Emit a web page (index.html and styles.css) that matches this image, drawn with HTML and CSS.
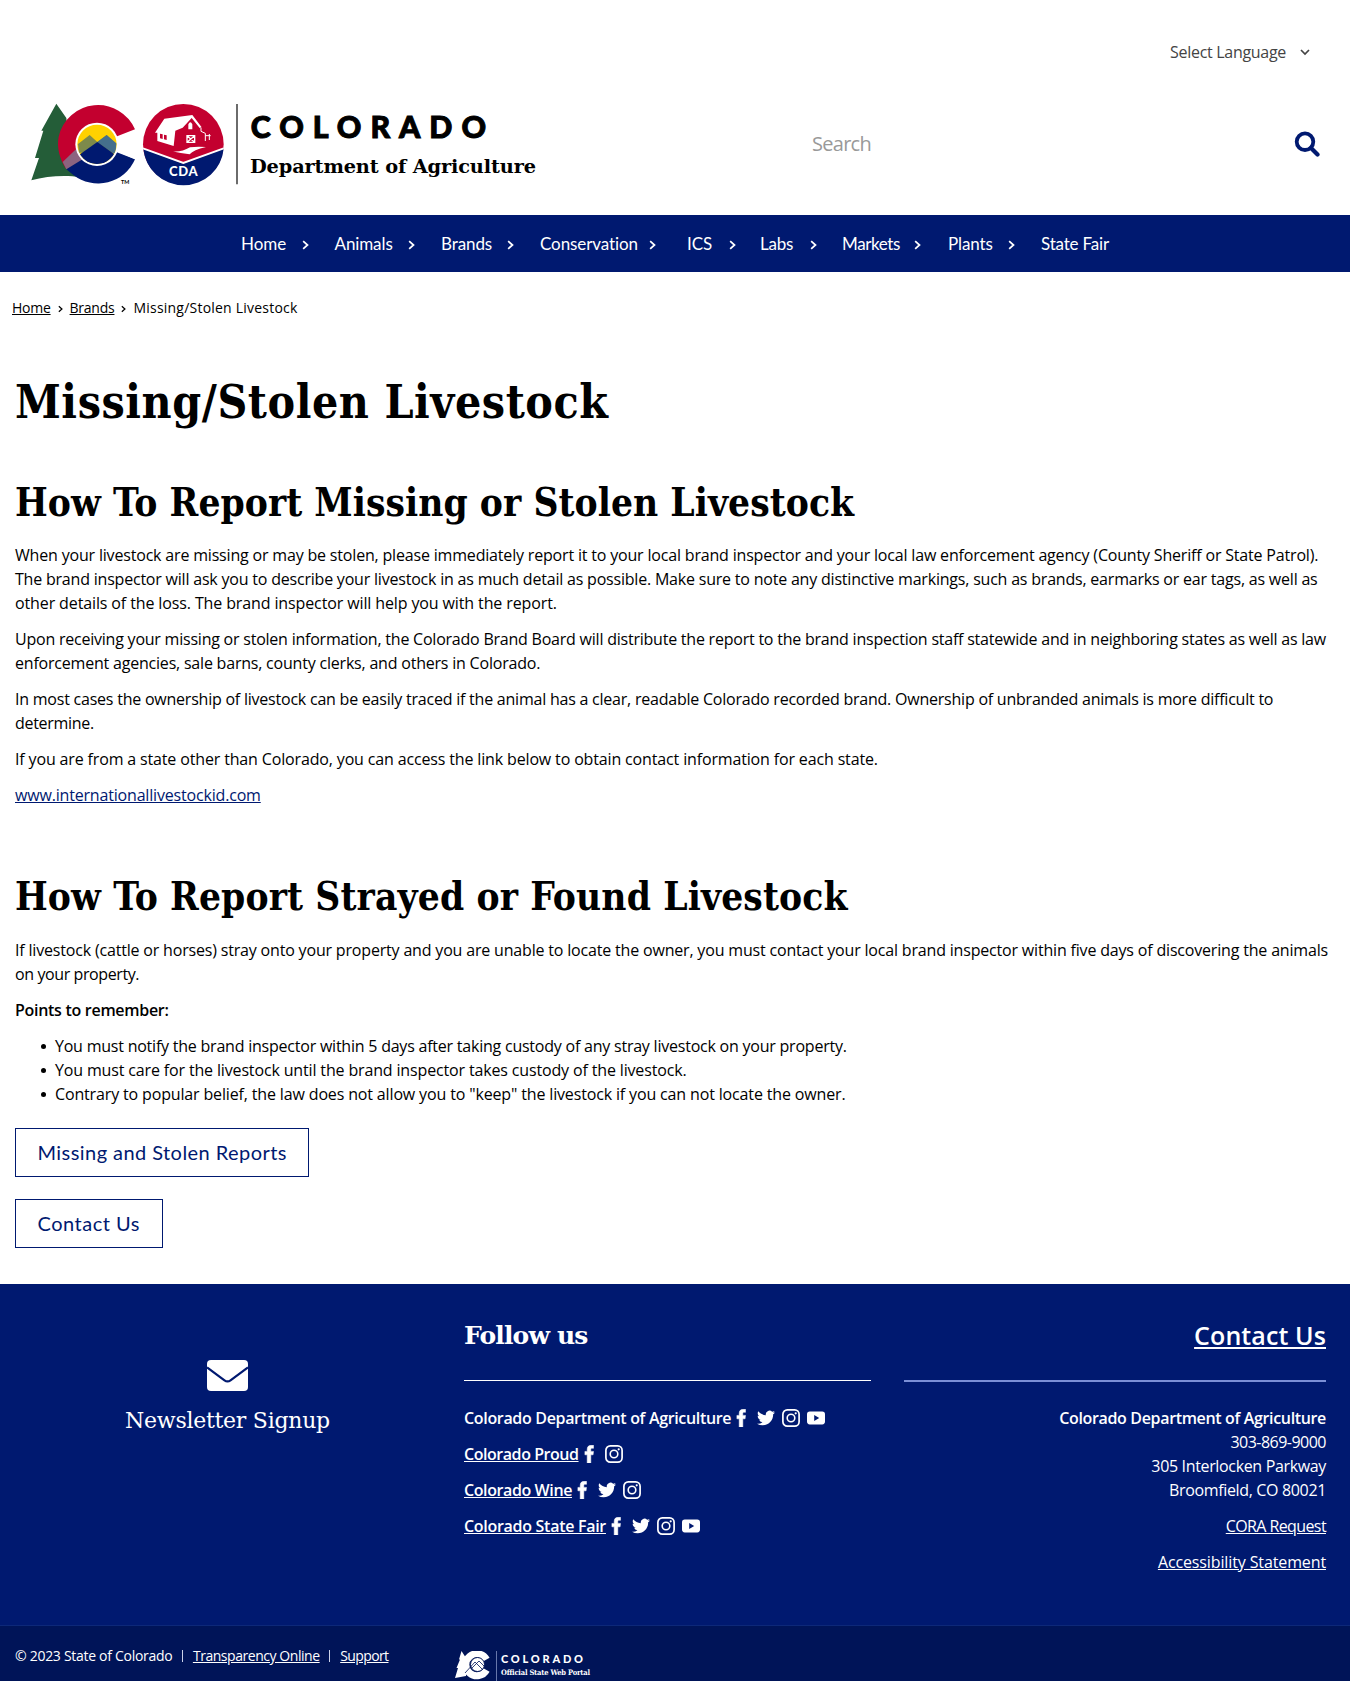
FILE: index.html
```
<!DOCTYPE html>
<html lang="en">
<head>
<meta charset="utf-8">
<title>Missing/Stolen Livestock | Department of Agriculture</title>
<link rel="stylesheet" href="styles.css">
</head>
<body>
<svg class="defs" aria-hidden="true">
  <symbol id="fb" viewBox="0 0 18 18"><path stroke="#fff" stroke-width=".5" d="M7.200 18V9.800H4.900V6.400h2.300V4.500C7.200 1.700 8.600.3 11.300.3h2.200v3h-1.400c-1 0-1.300.4-1.300 1.400v1.700h2.700l-.4 3.400h-2.300V18z"/></symbol>
  <symbol id="tw" viewBox="0 0 24 24"><path d="M23.950 4.570a10 10 0 0 1-2.820.77 4.960 4.960 0 0 0 2.160-2.720c-.95.56-2 .96-3.120 1.190a4.920 4.920 0 0 0-8.380 4.480C7.690 8.090 4.070 6.130 1.640 3.160a4.820 4.820 0 0 0-.67 2.480c0 1.710.87 3.210 2.190 4.100a4.900 4.900 0 0 1-2.230-.62v.06a4.920 4.920 0 0 0 3.950 4.830 5 5 0 0 1-2.210.08 4.940 4.940 0 0 0 4.600 3.420A9.870 9.870 0 0 1 0 19.540a13.990 13.990 0 0 0 7.550 2.210c9.050 0 14-7.500 14-13.980 0-.21 0-.42-.02-.63a9.940 9.940 0 0 0 2.460-2.550z"/></symbol>
  <symbol id="ig" viewBox="0 0 18 18"><rect x=".9" y=".9" width="16.200" height="16.200" rx="4.400" fill="none" stroke="#fff" stroke-width="1.700"/><circle cx="9" cy="9" r="3.800" fill="none" stroke="#fff" stroke-width="1.600"/><circle cx="13.700" cy="4.300" r="1.100"/></symbol>
  <symbol id="yt" viewBox="0 0 18 18"><path fill-rule="evenodd" d="M2.800 2.600h12.400A2.800 2.800 0 0 1 18 5.400v7.200a2.800 2.800 0 0 1-2.800 2.800H2.800A2.800 2.800 0 0 1 0 12.600V5.400a2.800 2.800 0 0 1 2.800-2.800zM7.200 6.100v5.800L12.200 9z"/></symbol>
  <symbol id="chev" viewBox="0 0 6 8"><path d="M1 .7 4.700 4 1 7.300" fill="none" stroke="currentColor" stroke-width="1.500"/></symbol>
</svg>

<header class="header">
  <div class="language"><span>Select Language</span>
    <svg width="10" height="7" viewBox="0 0 10 7"><path d="M1 1l4 4 4-4" fill="none" stroke="#444" stroke-width="1.700"/></svg>
  </div>
  <div class="brandbar">
    <svg class="logo" viewBox="30 36 1530 252" role="img" aria-label="Colorado Department of Agriculture">
      <path fill="#245d38" d="M109 41 139 84 150 190 180 262C140 255 80 258 34 271L57 204H45L70 122H64Z"/>
      <path fill="#c3002f" d="M345 118A121 121 0 0 0 116 140C110 172 118 205 139 238L232 162Z"/>
      <path fill="#001970" d="M139 238 178 200 232 164 345 208A121 121 0 0 1 160 255Z"/>
      <path fill="#8c6480" d="M128 216 174 172 200 200 139 238Z"/>
      <path fill="#fff" d="M297 141 345 120V208L297 187Z"/>
      <circle cx="231" cy="163" r="65" fill="#fff"/>
      <circle cx="231" cy="163" r="59" fill="#ffd100"/>
      <path fill="#7d8a4b" d="M174 162 209 135 232 156 260 135 288 162 285 188 177 188Z"/>
      <path fill="#456f8c" d="M232 156 260 135 289 160A59 59 0 0 1 282 191Z"/>
      <path fill="#001970" d="M180 193 232 156 282 192A59 59 0 0 1 180 193Z"/>
      <text x="303" y="282" font-family="Lato,sans-serif" font-size="17" font-weight="700" textLength="25" lengthAdjust="spacingAndGlyphs">TM</text>
      <circle cx="490" cy="163" r="121" fill="#c3002f"/>
      <path fill="#001970" d="M370 176 490 221 611 176A121 121 0 0 1 370 176Z"/>
      <path fill="none" stroke="#fff" stroke-width="6" d="M369 175 490 219 611 175"/>
      <path fill="#fff" d="M405 128 433 86 517 75 545 112 539 114 515 84 488 113 466 122 461 168 412 153V128Z"/>
      <path fill="#c3002f" d="M420 131 428 133V147L420 145ZM432 134 440 136V150L432 148Z"/>
      <path fill="none" stroke="#fff" stroke-width="4" d="M501 137H524V157H501ZM501 137 524 157M524 137 501 157"/>
      <path fill="none" stroke="#fff" stroke-width="3" d="M543 114V124L556 130V153M556 137H572M568 132V150"/>
      <path fill="#fff" d="M505 118V103Q511 90 517 103V118ZM456 184Q485 187 510 172Q530 169 558 171Q520 180 509 193Q482 190 456 184Z"/>
      <text x="490" y="259" text-anchor="middle" fill="#fff" font-family="Lato,sans-serif" font-weight="900" font-size="39" textLength="86">CDA</text>
      <path stroke="#222" stroke-width="4" d="M651 42V283"/>
      <text x="692" y="144" stroke="#000" stroke-width="3" font-family="Lato,sans-serif" font-weight="900" font-size="91" textLength="706">COLORADO</text>
      <text x="690" y="248" font-family="'DejaVu Serif',serif" font-weight="700" font-size="58" textLength="858">Department of Agriculture</text>
    </svg>
    <div class="search">
      <span>Search</span>
      <svg width="26" height="26" viewBox="0 0 26 26"><circle cx="11" cy="10.700" r="8.300" fill="none" stroke="#001970" stroke-width="3.800"/><path d="M17 17 23.500 23.500" stroke="#001970" stroke-width="4.200" stroke-linecap="round"/></svg>
    </div>
  </div>
</header>

<nav class="nav">
  <a class="n1">Home<svg><use href="#chev"/></svg></a>
  <a class="n2">Animals<svg><use href="#chev"/></svg></a>
  <a class="n3">Brands<svg><use href="#chev"/></svg></a>
  <a class="n4">Conservation<svg><use href="#chev"/></svg></a>
  <a class="n5">ICS<svg><use href="#chev"/></svg></a>
  <a class="n6">Labs<svg><use href="#chev"/></svg></a>
  <a class="n7">Markets<svg><use href="#chev"/></svg></a>
  <a class="n8">Plants<svg><use href="#chev"/></svg></a>
  <a>State Fair</a>
</nav>

<div class="crumbs"><u>Home</u><svg><use href="#chev"/></svg><u>Brands</u><svg><use href="#chev"/></svg><span class="current">Missing/Stolen Livestock</span></div>

<main class="content">
  <h1>Missing/Stolen Livestock</h1>
  <h2>How To Report Missing or Stolen Livestock</h2>
  <p><span class="l18">When your livestock are missing or may be stolen, please immediately report it to your local brand inspector and your local law enforcement agency (County Sheriff or State Patrol).</span>
  <span class="l20">The brand inspector will ask you to describe your livestock in as much detail as possible. Make sure to note any distinctive markings, such as brands, earmarks or ear tags, as well as</span>
  <span class="l12">other details of the loss. The brand inspector will help you with the report.</span></p>
  <p><span class="l22">Upon receiving your missing or stolen information, the Colorado Brand Board will distribute the report to the brand inspection staff statewide and in neighboring states as well as law</span>
  <span class="l20">enforcement agencies, sale barns, county clerks, and others in Colorado.</span></p>
  <p><span class="l22">In most cases the ownership of livestock can be easily traced if the animal has a clear, readable Colorado recorded brand. Ownership of unbranded animals is more difficult to</span>
  <span class="l28">determine.</span></p>
  <p><span class="l15">If you are from a state other than Colorado, you can access the link below to obtain contact information for each state.</span></p>
  <p><span class="l18"><a class="link">www.internationallivestockid.com</a></span></p>
  <h2 class="second">How To Report Strayed or Found Livestock</h2>
  <p><span class="l18">If livestock (cattle or horses) stray onto your property and you are unable to locate the owner, you must contact your local brand inspector within five days of discovering the animals</span>
  <span class="l40">on your property.</span></p>
  <p><span class="l28"><b>Points to remember:</b></span></p>
  <ul>
    <li class="l22">You must notify the brand inspector within 5 days after taking custody of any stray livestock on your property.</li>
    <li class="l15">You must care for the livestock until the brand inspector takes custody of the livestock.</li>
    <li class="l15">Contrary to popular belief, the law does not allow you to "keep" the livestock if you can not locate the owner.</li>
  </ul>
  <a class="button wide">Missing and Stolen Reports</a>
  <a class="button">Contact Us</a>
</main>

<footer class="footer">
  <div class="newsletter">
    <svg width="41" height="31" viewBox="0 0 41 31"><rect width="41" height="31" rx="4" fill="#fff"/><path d="M0 7.500 17.500 20.300Q20.500 22.500 23.500 20.300L41 7.500" fill="none" stroke="#001970" stroke-width="2.200"/></svg>
    <span>Newsletter Signup</span>
  </div>
  <div class="follow">
    <h3>Follow us</h3>
    <div class="row"><b>Colorado Department of Agriculture</b><svg><use href="#fb"/></svg><svg><use href="#tw"/></svg><svg><use href="#ig"/></svg><svg><use href="#yt"/></svg></div>
    <div class="row"><b class="l45"><u>Colorado Proud</u></b><svg><use href="#fb"/></svg><svg><use href="#ig"/></svg></div>
    <div class="row"><b class="l40"><u>Colorado Wine</u></b><svg><use href="#fb"/></svg><svg><use href="#tw"/></svg><svg><use href="#ig"/></svg></div>
    <div class="row"><b class="l28"><u>Colorado State Fair</u></b><svg><use href="#fb"/></svg><svg><use href="#tw"/></svg><svg><use href="#ig"/></svg><svg><use href="#yt"/></svg></div>
  </div>
  <div class="contact">
    <h3><u>Contact Us</u></h3>
    <p><b>Colorado Department of Agriculture</b><br><span class="l52">303-869-9000</span><br>305 Interlocken Parkway<br>Broomfield, CO 80021</p>
    <p class="l60"><u>CORA Request</u></p>
    <p class="l12"><u>Accessibility Statement</u></p>
  </div>
</footer>
<div class="legal">
  <div class="copyright"><span class="l28">© 2023 State of Colorado</span><i></i><u>Transparency Online</u><i></i><u class="l60">Support</u></div>
  <svg class="portal" width="140" height="30" viewBox="0 0 140 30">
    <path fill="#fff" d="M6.500 0 11 7V25L0 27 3 17H1.500L5 8.500H4Z"/>
    <path d="M31.500 8.500A11 11 0 1 0 31.500 19" fill="none" stroke="#fff" stroke-width="7"/>
    <circle cx="22.500" cy="13.500" r="7" fill="#fff" stroke="#001458"/>
    <path d="M10 22 20 11 28 19M17 17 24 10 29 15" fill="none" stroke="#001458" stroke-width=".8"/>
    <path d="M41.500 0V30" stroke="#8190c0" stroke-width=".8"/>
    <g fill="#fff"><text x="46" y="12" font-family="Lato,sans-serif" font-weight="900" font-size="11" textLength="82">COLORADO</text>
    <text x="46" y="24" font-family="'DejaVu Serif Condensed','DejaVu Serif',serif" font-weight="700" font-size="7.500" textLength="89">Official State Web Portal</text></g>
  </svg>
</div>
</body>
</html>
```
FILE: styles.css
```
* { box-sizing: border-box; }
body {
  margin: 0;
  height: 1681px;
  overflow: hidden;
  background: #fff;
  color: #000;
  font: 16px/24px "Open Sans", sans-serif;
}
.defs { display: none; }
h1, h2, h3, p, ul { margin: 0; }

.header { height: 215px; padding: 40px 30px 0; }
.language {
  display: flex;
  align-items: center;
  justify-content: flex-end;
  gap: 14px;
  height: 24px;
  padding-right: 10px;
  color: #444;
  letter-spacing: -0.3px;
}
.brandbar { display: flex; justify-content: space-between; padding-top: 38px; }
.logo { width: 510px; height: 84px; overflow: visible; }
.search {
  display: flex;
  align-items: center;
  justify-content: space-between;
  width: 508px;
  height: 84px;
  color: #999;
  font-size: 20px;
  letter-spacing: -0.72px;
}

.nav {
  display: flex;
  align-items: center;
  height: 57px;
  padding-left: 241px;
  background: #001970;
  color: #fff;
  font: 17px/24px Lato, sans-serif;
  letter-spacing: -0.1px;
}
.nav a { display: flex; align-items: center; justify-content: space-between; white-space: nowrap; padding-right: 26px; }
.nav a:last-child { padding: 0; letter-spacing: -0.18px; }
.nav svg { width: 7px; height: 10px; margin-top: 2px; }
.nav .n1 { width: 93.5px; letter-spacing: 0; }
.nav .n2 { width: 106.5px; }
.nav .n3 { width: 99px; }
.nav .n4 { width: 147px; padding-right: 31px; }
.nav .n5 { width: 73px; padding-right: 24px; }
.nav .n6 { width: 82px; padding-right: 25px; letter-spacing: -0.26px; }
.nav .n7 { width: 106px; padding-right: 27px; letter-spacing: -0.38px; }
.nav .n8 { width: 93px; }

.crumbs {
  display: flex;
  align-items: center;
  padding: 24px 12px 0;
  font-size: 14px;
  letter-spacing: -0.25px;
}
.crumbs svg { width: 5px; height: 8px; margin: 1px 7px 0; }
.crumbs .current { letter-spacing: 0.22px; }

.content { padding: 0 15px; }
h1, h2 {
  font-family: "DejaVu Serif Condensed", "DejaVu Serif", serif;
  white-space: nowrap;
}
h1 { margin-top: 52px; font-size: 46px; line-height: 60px; letter-spacing: 0.55px; }
h2 { margin: 46px 0 15px; font-size: 38.5px; line-height: 50px; letter-spacing: 0.05px; }
h2.second { margin: 65px 0 16px; letter-spacing: 0.12px; }
.content p { margin-bottom: 12px; }
.content p > span { display: block; white-space: nowrap; }
.l12 { letter-spacing: -0.12px; }
.l15 { letter-spacing: -0.15px; }
.l18 { letter-spacing: -0.18px; }
.l20 { letter-spacing: -0.205px; }
.l22 { letter-spacing: -0.224px; }
.l28 { letter-spacing: -0.29px; }
.l40 { letter-spacing: -0.4px; }
.l45 { letter-spacing: -0.45px; }
.l52 { letter-spacing: -0.52px; }
.l60 { letter-spacing: -0.6px; }
b { font-weight: 600; }
.link { color: #001970; text-decoration: underline; }
ul { padding-left: 26px; list-style: none; }
li { display: flex; align-items: center; }
li::before { content: ""; width: 5px; height: 5px; margin-right: 9px; border-radius: 50%; background: #000; }
.button {
  display: block;
  width: 148px;
  height: 49px;
  margin-top: 22px;
  padding-left: 21.5px;
  border: 1px solid #001970;
  color: #001970;
  font: 20px/47px Lato, sans-serif;
  letter-spacing: 0.5px;
  white-space: nowrap;
}
.button.wide { width: 294px; letter-spacing: 0.44px; }

.footer {
  display: grid;
  grid-template-columns: 455px 407px 422px;
  column-gap: 9px;
  height: 341px;
  margin-top: 36px;
  background: #001970;
  color: #fff;
}
.newsletter { display: flex; flex-direction: column; align-items: center; padding-top: 76px; }
.newsletter span { margin-top: 15px; font: 22px/30px "DejaVu Serif", serif; letter-spacing: -0.26px; }
h3 { height: 97px; padding-top: 34px; margin-bottom: 25px; font-size: 25px; line-height: 36px; }
.follow h3 { border-bottom: 1px solid #fff; font-family: "DejaVu Serif", serif; letter-spacing: -0.86px; }
.row { display: flex; align-items: center; height: 24px; margin-bottom: 12px; letter-spacing: -0.33px; white-space: nowrap; }
.row svg { width: 18px; height: 18px; margin-right: 7px; fill: #fff; }
.row b { margin-right: 1px; }
.contact { margin-left: 24px; width: 422px; text-align: right; letter-spacing: -0.345px; }
.contact h3 { height: 98px; margin-bottom: 24px; padding-top: 33px; border-bottom: 2px solid #7b8fd6; font-weight: 600; letter-spacing: 0.1px; }
.contact p { margin-bottom: 12px; }
.contact .l12 { letter-spacing: -0.12px; }
.contact .l60 { letter-spacing: -0.6px; }

.legal {
  display: flex;
  height: 56px;
  border-top: 1px solid #0d2878;
  background: #001458;
  color: #fff;
}
.copyright { display: flex; align-items: center; width: 455px; padding: 18px 0 0 15px; height: 42px; font-size: 14px; letter-spacing: -0.45px; }
.copyright i { width: 1px; height: 12px; margin: 0 10px 0 9.5px; background: #ccd3ea; }
.portal { margin-top: 25px; }
```
